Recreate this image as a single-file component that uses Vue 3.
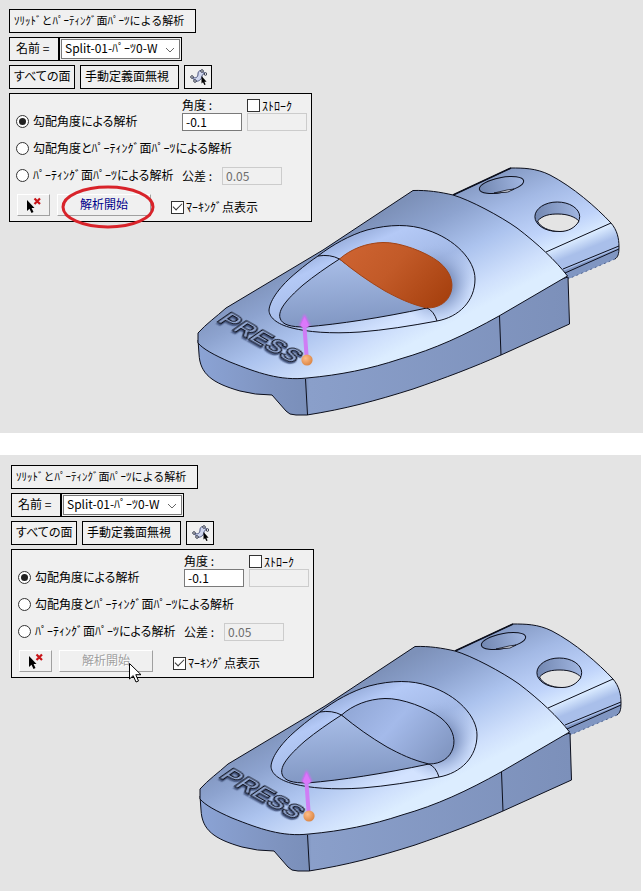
<script setup>
import { ref } from 'vue'

const scenes = ref([
  { id: 'before', marked: true, mode: 'angle', angle: '-0.1', stroke: false, marking: true, view: '0 0 643 433' },
  { id: 'after', marked: false, mode: 'angle', angle: '-0.1', stroke: false, marking: true, view: '-2 -1 641 436' }
])
</script>

<template>
  <main class="page">
    <section v-for="s in scenes" :key="s.id" class="scene" :class="s.id">
      <svg class="model" :viewBox="s.view" aria-hidden="true">
        <defs>
          <linearGradient :id="s.id + '-top'" gradientUnits="userSpaceOnUse" x1="340" y1="235" x2="400" y2="350">
            <stop offset="0" stop-color="#7d91b9" />
            <stop offset=".25" stop-color="#8da3cf" />
            <stop offset=".55" stop-color="#acc3ee" />
            <stop offset=".85" stop-color="#cfe0fc" />
            <stop offset="1" stop-color="#dcedff" />
          </linearGradient>
          <linearGradient :id="s.id + '-side'" gradientUnits="userSpaceOnUse" x1="198" y1="0" x2="569" y2="0">
            <stop offset="0" stop-color="#8ba3d5" />
            <stop offset=".2" stop-color="#7f94c0" />
            <stop offset=".29" stop-color="#7a8fba" />
            <stop offset=".3" stop-color="#8a9fca" />
            <stop offset="1" stop-color="#7c90ba" />
          </linearGradient>
          <linearGradient :id="s.id + '-tail'" gradientUnits="userSpaceOnUse" x1="490" y1="172" x2="531" y2="272">
            <stop offset="0" stop-color="#8297c1" />
            <stop offset=".35" stop-color="#a3b9e5" />
            <stop offset=".7" stop-color="#bfd3fa" />
            <stop offset=".88" stop-color="#d9eaff" />
            <stop offset="1" stop-color="#a9bfea" />
          </linearGradient>
          <linearGradient :id="s.id + '-ring'" gradientUnits="userSpaceOnUse" x1="330" y1="240" x2="372" y2="333">
            <stop offset="0" stop-color="#93a9d7" />
            <stop offset=".2" stop-color="#b4c9f6" />
            <stop offset=".6" stop-color="#a3b9e6" />
            <stop offset="1" stop-color="#d3e3ff" />
          </linearGradient>
          <radialGradient :id="s.id + '-shade'" gradientUnits="userSpaceOnUse" cx="436" cy="284" r="40">
            <stop offset="0" stop-color="#7e93be" />
            <stop offset=".45" stop-color="#8297c4" stop-opacity=".9" />
            <stop offset="1" stop-color="#a3b9e6" stop-opacity="0" />
          </radialGradient>
          <linearGradient :id="s.id + '-floor'" gradientUnits="userSpaceOnUse" x1="345" y1="255" x2="350" y2="325">
            <stop offset="0" stop-color="#aabfe9" />
            <stop offset="1" stop-color="#8197c3" />
          </linearGradient>
          <linearGradient :id="s.id + '-bowl'" gradientUnits="userSpaceOnUse" x1="360" y1="240" x2="440" y2="310">
            <stop offset="0" :stop-color="s.marked ? '#cc6230' : '#93a9d8'" />
            <stop offset=".4" :stop-color="s.marked ? '#c25a28' : '#a4baea'" />
            <stop offset="1" :stop-color="s.marked ? '#a6400e' : '#8095c0'" />
          </linearGradient>
          <linearGradient :id="s.id + '-hole'" x1="0" y1="0" x2="1" y2="0">
            <stop offset="0" stop-color="#7287b1" />
            <stop offset="1" stop-color="#a1b6e1" />
          </linearGradient>
          <radialGradient :id="s.id + '-ball'" cx=".38" cy=".35" r=".7">
            <stop offset="0" stop-color="#ffbd88" />
            <stop offset="1" stop-color="#d98342" />
          </radialGradient>
          <filter :id="s.id + '-soft'" x="-50%" y="-50%" width="200%" height="200%">
            <feGaussianBlur stdDeviation="1.2" />
          </filter>
        </defs>

        <g stroke="#0c0f1c" stroke-width="1" stroke-linejoin="round" fill="none">
          <path :fill="`url(#${s.id}-tail)`" stroke="none" d="M453 195 L511 168 C523 168 536 168 550 175 C573 187 596 207 611 223 C617 230 619 238 619 247 C619 254 618 257 615 259 L568 279 Z" />
          <path fill="#8096c2" stroke="none" d="M563 271 L619 248 Q619 256 615 259 L568 279Z" />
          <path d="M453 195 L511 168 C523 168 536 168 550 175 C573 187 596 207 611 223 C617 230 619 238 619 247 C619 254 618 257 615 259" />
          <path d="M453 195 L511 168" stroke-width="1.6" />
          <path stroke-dasharray="2 3" stroke="#53668f" d="M615 259 L568 279" />
          <path d="M546 252 L611 223 M563 269 L619 246 M565 273 L619 249" />
          <ellipse cx="501.500" cy="185" rx="22.500" ry="7.500" transform="rotate(-11 501.500 185)" :fill="`url(#${s.id}-hole)`" />
          <path fill="#dfe3ee" d="M494 193 L507 190 L514 189 L508 192 L496 193Z" stroke-width=".8" />
          <ellipse cx="557.300" cy="216.700" rx="22.400" ry="14.700" :fill="`url(#${s.id}-hole)`" />
          <path fill="#e4e4e4" d="M537.500 221 C543 215 550 214 558 214 C568 214 575 217 579 221 C575 228 568 231.500 560 231.500 C549 231.500 540 227 537.500 221Z" />

          <path :fill="`url(#${s.id}-side)`" d="M198 340 L199 354 C200 374 212 383 240 391 Q255 395 272 395 L286 411 Q289 415 296 415 L307 415 C345 409 375 401 413 389 C445 378 474 367 501 355 L569.500 324 L568 277 L400 330Z" />
          <path :fill="`url(#${s.id}-top)`" d="M198 333 C206 324 216 317 226 308 L323 250 L413 190.500 C427 190 440 192 453 195 C470 200 500 216 517 228 C538 244 556 261 567.500 276 L499 316 C465 335 435 349 400 359 C370 369 340 375 307 378 C280 381 258 373 230 362 C214 355 203 349 198 343Z" />
          <path d="M305.500 379 L307.500 415 M499.500 316 L501 355" />

          <path :fill="`url(#${s.id}-ring)`" d="M318 256 C332 245 350 235 367 230 C390 224 410 224 427 230 C455 239 475 260 475 279 C475 301 459 317 437 321 C410 326 385 330 360 332 C330 334 308 332 292 328 C276 324 269 317 269 310 C270 300 280 286 297 272 C304 266 312 260 318 256Z" />
          <path :fill="`url(#${s.id}-shade)`" stroke="none" d="M367 231 C390 225 410 225 427 231 C455 240 474 260 474 279 C474 301 459 316 437 320 C410 325 385 329 360 331Z" />
          <path :fill="`url(#${s.id}-floor)`" d="M339.500 259 C327 267 314 276 303 285 C286 300 278 310 280 318 C282 325 291 327 305 327 C340 324 380 318 427 308 C400 298 370 283 339.500 259Z" />
          <path :fill="`url(#${s.id}-bowl)`" :stroke="s.marked ? '#a24315' : '#0c0f1c'" d="M339.500 259 C351 249 366 243 383 242.500 C400 242 426 252 439 262 C450 271 454 282 451 292 C448 302 439 308 427 308 C410 304 398 298 385 291 C368 281 354 271 339.500 259Z" />
          <path d="M318 256 Q330 254 339.500 259 M427 308 Q434 311 437 321" />
        </g>

        <text class="emboss" transform="matrix(1.12 .63 -.95 .66 216 321)" x="0" y="0">PRESS</text>

        <g stroke-linecap="round">
          <path d="M304.500 327 L306.500 355" stroke="#cf7df5" stroke-width="4" />
          <path d="M299.500 326 L304.500 314 L310 326Z" fill="#e65cff" :filter="`url(#${s.id}-soft)`" />
          <path d="M300.500 326 L304.500 317 L309 326 Q305 329 300.500 326Z" fill="#db78fa" />
          <circle cx="307" cy="360" r="5.600" :fill="`url(#${s.id}-ball)`" />
        </g>
      </svg>

      <form class="tools" @submit.prevent>
        <h2 class="box title">ｿﾘｯﾄﾞとﾊﾟｰﾃｨﾝｸﾞ面ﾊﾟｰﾂによる解析</h2>

        <div class="name-row">
          <label class="box name" :for="s.id + '-name'">名前 =</label>
          <div class="box picker">
            <select :id="s.id + '-name'">
              <option>Split-01-ﾊﾟｰﾂ0-W</option>
            </select>
            <svg class="chevron" viewBox="0 0 10 6" aria-hidden="true"><path d="M1 1 L5 5 L9 1" /></svg>
          </div>
        </div>

        <div class="button-row">
          <button type="button" class="box all">すべての面</button>
          <button type="button" class="box manual">手動定義面無視</button>
          <button type="button" class="box pick" aria-label="面を選択">
            <svg viewBox="0 0 18 18" width="18" height="18" aria-hidden="true">
              <path d="M3 9 C7 11 9 9 9 6 C9 3 11 2 13 3 L17 6 C14 5 13 7 13 9 C12 12 9 14 6 13Z" fill="#cfd6ee" stroke="#4a5480" />
              <g fill="#fff" stroke="#1d2338" stroke-width=".9">
                <circle cx="3" cy="9" r="1.300" />
                <circle cx="6" cy="13" r="1.300" />
                <circle cx="13" cy="3" r="1.300" />
                <circle cx="16.500" cy="6" r="1.300" />
              </g>
              <path d="M12.500 8 V15.500 L14 14.200 L15.300 17 L16.600 16.400 L15.400 13.700 H17.600Z" fill="#000" />
            </svg>
          </button>
        </div>

        <div class="panel">
          <div class="row first">
            <label class="choice"><input v-model="s.mode" type="radio" value="angle" :name="s.id + '-mode'" />勾配角度による解析</label>
            <div class="field">
              <label :for="s.id + '-angle'">角度 :</label>
              <input :id="s.id + '-angle'" v-model="s.angle" class="text" type="text" />
            </div>
            <div class="field">
              <label class="choice tight"><input v-model="s.stroke" type="checkbox" />ｽﾄﾛｰｸ</label>
              <input class="text" type="text" aria-label="ｽﾄﾛｰｸ" disabled />
            </div>
          </div>
          <div class="row">
            <label class="choice"><input v-model="s.mode" type="radio" value="both" :name="s.id + '-mode'" />勾配角度とﾊﾟｰﾃｨﾝｸﾞ面ﾊﾟｰﾂによる解析</label>
          </div>
          <div class="row third">
            <label class="choice"><input v-model="s.mode" type="radio" value="parting" :name="s.id + '-mode'" />ﾊﾟｰﾃｨﾝｸﾞ面ﾊﾟｰﾂによる解析</label>
            <label class="tolerance">公差 :<input class="text" type="text" value="0.05" disabled /></label>
          </div>
          <div class="row actions">
            <button type="button" class="raised clear" aria-label="選択解除">
              <svg viewBox="0 0 18 18" width="18" height="18" aria-hidden="true">
                <path d="M2 4 V15 L4.500 12.800 L6.500 17 L8.500 16 L6.600 12 H9.500Z" fill="#000" />
                <path d="M9.500 2.500 L15 8 M15 2.500 L9.500 8" stroke="#c81418" stroke-width="2.200" />
              </svg>
            </button>
            <div class="run">
              <button type="button" class="raised start" :disabled="!s.marked">解析開始</button>
              <svg v-if="s.marked" class="halo" viewBox="0 0 94 44" aria-hidden="true"><ellipse cx="47" cy="22" rx="45" ry="20" /></svg>
              <svg v-else class="pointer" viewBox="0 0 13 20" aria-hidden="true"><path d="M.5 .5 V16 L4.200 12.600 L7 19 L9.500 18 L6.800 11.700 H12Z" /></svg>
            </div>
            <label class="choice tight marking"><input v-model="s.marking" type="checkbox" />ﾏｰｷﾝｸﾞ点表示</label>
          </div>
        </div>
      </form>
    </section>
  </main>
</template>

<style>
body {
  margin: 0;
  background: #fff;
}
</style>

<style scoped>
.page {
  display: flex;
  flex-direction: column;
  gap: 22px;
  font: 12px/16px "Noto Sans CJK JP", "Liberation Sans", sans-serif;
  font-feature-settings: "palt";
  color: #000;
}
.scene {
  display: grid;
  grid-template-columns: minmax(0, 1fr);
  background: #e4e4e4;
}
.after {
  margin-right: 2px;
}
.model,
.tools {
  grid-area: 1 / 1;
}
.model {
  display: block;
  width: 100%;
}
.emboss {
  font: bold 20px "Liberation Sans", sans-serif;
  fill: #93a8d3;
  stroke: #10131f;
  stroke-width: 1px;
  filter: drop-shadow(1px 2px 0 #4b5c85);
}
.tools {
  justify-self: start;
  align-self: start;
  display: flex;
  flex-direction: column;
  align-items: flex-start;
  gap: 4px;
  padding: 9px;
}
.after .tools {
  padding: 10px 11px;
}
.box,
.panel {
  box-sizing: border-box;
  border: 1px solid #000;
  background: #f0f0f0;
}
.box {
  height: 24px;
  margin: 0;
  padding: 2px 4px 4px;
  font: inherit;
  font-feature-settings: inherit;
  color: inherit;
  text-align: left;
  white-space: nowrap;
}
.title {
  min-width: 187px;
  font-size: 11px;
  font-feature-settings: normal;
}
.name-row,
.button-row {
  display: flex;
}
.button-row {
  gap: 5px;
}
.name {
  width: 50px;
  padding-left: 6px;
}
.picker {
  position: relative;
  width: 123px;
  padding: 1px;
}
select {
  appearance: none;
  display: block;
  box-sizing: border-box;
  width: 100%;
  height: 20px;
  padding: 0 3px 2px;
  border: 1px solid #7a7a7a;
  border-radius: 0;
  background: #fff;
  font: inherit;
  color: inherit;
}
.chevron {
  position: absolute;
  right: 6px;
  top: 9px;
  width: 10px;
  height: 6px;
  fill: none;
  stroke: #666;
}
.all {
  width: 66px;
}
.manual {
  width: 99px;
}
.pick {
  width: 28px;
  padding: 2px 4px;
}
.pick svg,
.clear svg {
  display: block;
}
.panel {
  display: flex;
  flex-direction: column;
  gap: 9px;
  width: 303px;
  padding: 4px 4px 5px 6px;
}
.row {
  display: flex;
  align-items: center;
  height: 18px;
  white-space: nowrap;
}
.first {
  align-items: flex-end;
  justify-content: space-between;
  height: 33px;
}
.first > .choice {
  flex: 1;
}
.first .field + .field {
  margin-left: 5px;
}
.choice {
  display: flex;
  align-items: center;
  gap: 4px;
  box-sizing: border-box;
  height: 18px;
  padding-bottom: 2px;
}
.tight {
  gap: 2px;
  padding-bottom: 0;
}
.field {
  display: flex;
  flex-direction: column;
  width: 60px;
}
.field > label {
  height: 15px;
  line-height: 14px;
}
.text {
  box-sizing: border-box;
  width: 60px;
  height: 18px;
  padding: 0 3px 2px;
  border: 1px solid #7a7a7a;
  background: #fff;
  font: inherit;
  color: #000;
}
.text:disabled {
  border-color: #ccc;
  background: #f0f0f0;
  color: #6d6d6d;
}
input[type="radio"],
input[type="checkbox"] {
  appearance: none;
  display: grid;
  place-items: center;
  flex: none;
  box-sizing: border-box;
  width: 13px;
  height: 13px;
  margin: 0;
  border: 1px solid #333;
  background: #fff;
}
input[type="radio"] {
  border-radius: 50%;
}
input[type="radio"]:checked::before {
  content: "";
  width: 7px;
  height: 7px;
  border-radius: 50%;
  background: #222;
}
input[type="checkbox"]:checked::before {
  content: "";
  box-sizing: border-box;
  width: 9px;
  height: 5px;
  margin-bottom: 3px;
  border: solid #333;
  border-width: 0 0 1px 1px;
  transform: rotate(-45deg);
}
.third {
  justify-content: space-between;
}
.tolerance {
  display: flex;
  align-items: center;
  justify-content: space-between;
  width: 100px;
  margin-right: 25px;
}
.actions {
  height: 22px;
  padding-left: 1px;
}
.raised {
  box-sizing: border-box;
  height: 22px;
  padding: 0;
  border: 1px solid;
  border-color: #fff #a0a0a0 #a0a0a0 #fff;
  background: #f0f0f0;
  font: inherit;
}
.clear {
  display: grid;
  place-items: center;
  width: 33px;
}
.run {
  position: relative;
  margin-left: 7px;
}
.start {
  display: block;
  width: 94px;
  padding-bottom: 2px;
  color: #00008b;
}
.start:disabled {
  color: #a0a0a0;
  text-shadow: 1px 1px 0 #fff;
}
.halo {
  position: absolute;
  left: 4px;
  top: -9px;
  width: 94px;
  height: 44px;
  fill: none;
  stroke: #d8232a;
  stroke-width: 3px;
  pointer-events: none;
}
.pointer {
  position: absolute;
  left: 70px;
  top: 13px;
  width: 13px;
  height: 20px;
  fill: #fff;
  stroke: #000;
  pointer-events: none;
}
.marking {
  margin-left: 20px;
  padding-top: 4px;
}
</style>
